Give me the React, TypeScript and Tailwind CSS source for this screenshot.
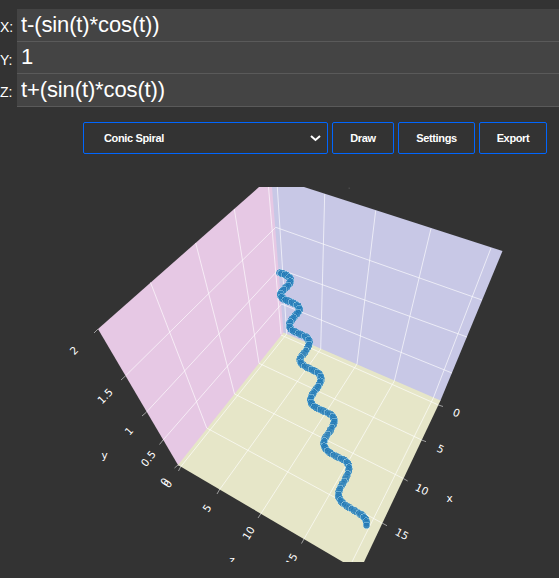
import React from "react";

type Point = [number, number];
type Line = [number, number, number, number];

const fields = [
  { label: "X:", value: "t-(sin(t)*cos(t))", row: "h-[33px]" },
  { label: "Y:", value: "1", row: "h-8" },
  { label: "Z:", value: "t+(sin(t)*cos(t))", row: "h-[33px]" },
];

const gridLines: Line[] = [
  // left wall
  [125.7, 375.7, 275.7, 227.3],
  [146.3, 412.3, 279, 269],
  [162.3, 441, 281.5, 304],
  [268.5, 187, 281, 334],
  [234.3, 209, 259, 363.3],
  [195.7, 243, 234.5, 394],
  [150.5, 282.5, 206.7, 428],
  // right wall
  [275.7, 227.3, 482, 300],
  [279, 269, 467, 337],
  [281.5, 304, 452, 373],
  [277.3, 187, 286.7, 334],
  [324.7, 194, 320.7, 349],
  [375.7, 210.5, 357, 364],
  [431, 228.5, 394.3, 381],
  [491, 248, 433.3, 398],
  // floor
  [286.7, 334, 180.5, 467],
  [320.7, 349, 219.3, 490],
  [357, 364, 260.7, 514],
  [394.3, 381, 304, 539],
  [433.3, 398, 352, 562],
  [281, 335, 438.5, 405],
  [259, 363.3, 421.7, 440],
  [234.5, 394, 403.3, 478.5],
  [206.7, 428, 382, 523],
];

const ticks: Line[] = [
  [98, 329, 94, 333],
  [125.7, 375.7, 121, 380],
  [146.3, 412.3, 142, 416],
  [162.3, 441, 159.5, 444.5],
  [178, 465, 174.5, 468],
  [180.5, 467, 178.5, 471],
  [219.3, 490, 217, 494],
  [260.7, 514, 258, 518],
  [304, 539, 301.5, 543.5],
  [438.5, 405, 443, 406.5],
  [421.7, 440, 426, 441.7],
  [403.3, 478.5, 407.7, 481],
  [382, 523, 387, 525.7],
];

const labels: { text: string; x: number; y: number; rotate: number }[] = [
  { text: "2", x: 74, y: 350.5, rotate: -45 },
  { text: "1.5", x: 105, y: 396, rotate: -46 },
  { text: "1", x: 129, y: 431, rotate: -48 },
  { text: "0.5", x: 148.3, y: 458.5, rotate: -51 },
  { text: "0", x: 164.5, y: 481.8, rotate: -52 },
  { text: "0", x: 167.7, y: 483.8, rotate: -52 },
  { text: "5", x: 207, y: 508, rotate: -56 },
  { text: "10", x: 248.5, y: 533, rotate: -58 },
  { text: "15", x: 291.5, y: 560, rotate: -61 },
  { text: "0", x: 456.5, y: 412.7, rotate: 22 },
  { text: "5", x: 440.5, y: 448.8, rotate: 24 },
  { text: "10", x: 422, y: 489.3, rotate: 26 },
  { text: "15", x: 402, y: 534, rotate: 28 },
];

const path: Point[] = [
  [279.8, 272.8], [285, 274.5], [290, 278.3], [289.3, 284], [283.5, 289.8],
  [280.5, 294.5], [283.5, 299], [291.7, 302.3], [298, 306], [299, 311],
  [293.8, 317.3], [289.7, 323.3], [291, 329.2], [298.3, 333.3], [306.5, 337.3],
  [309.3, 342.7], [306, 350.7], [300, 359], [303, 365], [311.7, 369.6],
  [319, 373.8], [321, 379.5], [318, 386.5], [312.7, 394], [310.6, 400.7],
  [314.3, 406.5], [322.7, 410.7], [331.5, 415.2], [334.3, 421.5], [330.5, 430],
  [324.8, 439], [324.2, 446], [329.3, 452.3], [338.5, 457.5], [346.8, 462],
  [349, 469], [345.5, 479], [340, 488.3], [338.7, 496.5], [343, 503.3],
  [351.7, 509], [361, 514.5], [365.7, 519.5], [366.5, 525.5],
];

function markers(points: Point[], perSegment: number): Point[] {
  const result: Point[] = [];
  for (let i = 0; i < points.length - 1; i++) {
    const a = points[Math.max(0, i - 1)];
    const b = points[i];
    const c = points[i + 1];
    const d = points[Math.min(points.length - 1, i + 2)];
    for (let k = 0; k < perSegment; k++) {
      const t = k / perSegment;
      const at = (n: 0 | 1) =>
        0.5 *
        (2 * b[n] +
          (c[n] - a[n]) * t +
          (2 * a[n] - 5 * b[n] + 4 * c[n] - d[n]) * t * t +
          (3 * b[n] - a[n] - 3 * c[n] + d[n]) * t * t * t);
      result.push([at(0), at(1)]);
    }
  }
  result.push(points[points.length - 1]);
  return result;
}

const beads = markers(path, 4);

function Button({ children, width }: { children: React.ReactNode; width: string }) {
  return (
    <button className={`${width} h-8 rounded-xs border border-[#0066ff] text-center text-[11px] font-bold tracking-[-0.35px] text-white`}>
      {children}
    </button>
  );
}

function Plot() {
  return (
    <svg className="mt-[33px] block h-[375px] w-[559px] shrink-0" viewBox="0 187 559 375">
      <polygon points="259,187 274,187 286,333 284,337 179,466 178,465 98,329" fill="#e6c8e4" />
      <polygon points="272,187 304,187 502.5,251 440.5,400.5 439,402 283.5,334" fill="#c8c8e6" />
      <polygon points="283.5,332.5 440.5,400.5 364,562 343,562 178,465" fill="#e6e6c8" />
      <g stroke="#ffffff" strokeOpacity="0.68" strokeWidth="0.95">
        {gridLines.map(([x1, y1, x2, y2], i) => (
          <line key={i} x1={x1} y1={y1} x2={x2} y2={y2} />
        ))}
      </g>
      <g stroke="#aaaaaa" strokeWidth="0.9">
        {ticks.map(([x1, y1, x2, y2], i) => (
          <line key={i} x1={x1} y1={y1} x2={x2} y2={y2} />
        ))}
      </g>
      <g shapeRendering="crispEdges">
        {beads.map(([x, y], i) => (
          <circle
            key={i}
            cx={x}
            cy={y}
            r={3.4}
            fill="#1f77b4"
            fillOpacity={0.6}
            stroke={i % 3 === 1 ? "#b4e2f2" : "#3d93c8"}
            strokeOpacity={0.6}
            strokeWidth={0.8}
          />
        ))}
      </g>
      <g fill="#ffffff" textAnchor="middle" className="font-['DejaVu_Sans',sans-serif] text-[10.5px]">
        {labels.map(({ text, x, y, rotate }, i) => (
          <text key={i} transform={`translate(${x} ${y}) rotate(${rotate})`} y="3.8">
            {text}
          </text>
        ))}
        <text x="104.5" y="459">y</text>
        <text x="449.5" y="502">x</text>
        <text x="232" y="563.5">z</text>
      </g>
      <rect x="348.5" y="187.5" width="1.5" height="1.5" fill="#484848" />
    </svg>
  );
}

export default function App() {
  return (
    <main className="flex h-[578px] w-[559px] flex-col overflow-hidden bg-[#333333] pt-[9px] font-['Liberation_Sans',Arial,sans-serif] text-white">
      {fields.map(({ label, value, row }) => (
        <label key={label} className={`flex shrink-0 ${row}`}>
          <span className="w-[17px] shrink-0 pt-[9px] text-sm leading-[18px]">{label}</span>
          <input
            className="min-w-0 flex-1 border-b border-[#5a5a5a] bg-[#444444] pb-0.5 pl-1 text-[22px] tracking-[-0.12px] outline-none"
            defaultValue={value}
          />
        </label>
      ))}
      <div className="mt-[15px] flex h-8 shrink-0 gap-1 pl-[83px]">
        <div className="flex w-[245px] items-center justify-between rounded-xs border border-[#0066ff] pr-[6px] pl-5 text-[11px] font-bold tracking-[-0.35px]">
          <span>Conic Spiral</span>
          <svg className="h-[7px] w-[11px]" viewBox="0 0 11 7" fill="none" stroke="white" strokeWidth="2">
            <path d="M1 1 L5.5 5 L10 1" />
          </svg>
        </div>
        <Button width="w-[62px]">Draw</Button>
        <Button width="w-[77px]">Settings</Button>
        <Button width="w-[68px]">Export</Button>
      </div>
      <Plot />
    </main>
  );
}
